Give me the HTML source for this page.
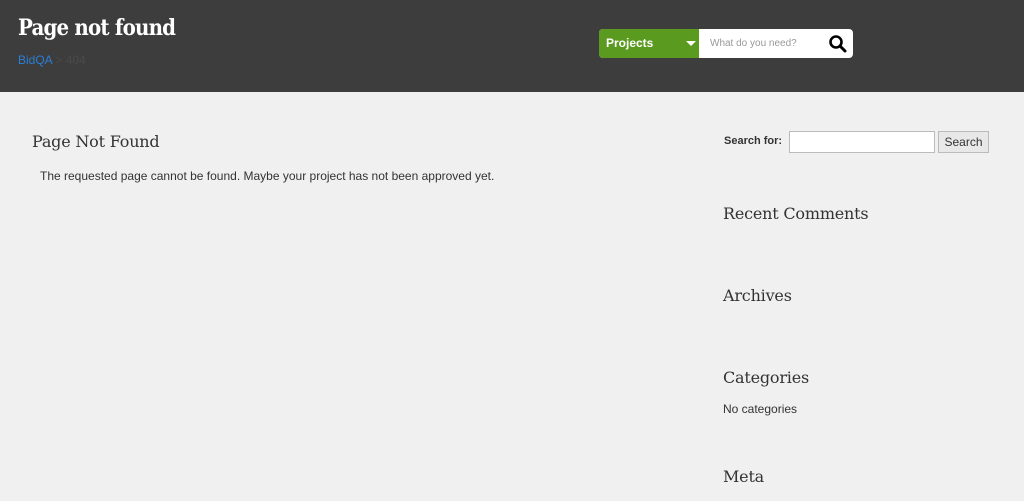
<!DOCTYPE html>
<html><head><style>
body{margin:0;width:1024px;height:501px;background:#f0f0f0;font-family:"Liberation Sans",sans-serif;overflow:hidden;position:relative}
.hd{position:absolute;left:0;top:0;width:1024px;height:92px;background:#3d3d3d}
h1{position:absolute;left:18px;top:15px;margin:0;font:bold 22px "DejaVu Serif",serif;font-stretch:condensed;color:#fff;letter-spacing:-0.8px}
.bc{position:absolute;left:18px;top:53px;font-size:12px;color:#4a4a4a}
.bc a{color:#2a7fd4;text-decoration:none}
.sb{position:absolute;left:599px;top:29px;width:254px;height:29px;border-radius:4px;overflow:hidden;background:#fff}
.pj{position:absolute;left:0;top:0;width:100px;height:29px;background:#5a9a1e;color:#fff;font-weight:bold;font-size:12px;line-height:29px;padding-left:7px;box-sizing:border-box}
.tri{position:absolute;left:87px;top:12px;border-left:5px solid transparent;border-right:5px solid transparent;border-top:5px solid #fff}
.ph{position:absolute;left:111px;top:9px;font-size:10px;color:#999}
.h2{font:16px "DejaVu Serif",serif;color:#333;position:absolute;margin:0;font-weight:normal;letter-spacing:-0.2px}
.t{position:absolute;font-size:12px;color:#333}
</style></head><body>
<div class="hd"></div>
<h1>Page not found</h1>
<div class="bc"><a>BidQA</a> &gt; 404</div>
<div class="sb"><div class="pj">Projects<div class="tri"></div></div><div class="ph">What do you need?</div>
<svg style="position:absolute;left:229px;top:5px" width="20" height="20" viewBox="0 0 20 20"><circle cx="8" cy="8" r="5.5" fill="none" stroke="#000" stroke-width="2.6"/><path d="M12 12l5 5" stroke="#000" stroke-width="3" stroke-linecap="round"/></svg></div>
<div class="h2" style="left:32px;top:132px">Page Not Found</div>
<div class="t" style="left:40px;top:169px">The requested page cannot be found. Maybe your project has not been approved yet.</div>
<div class="t" style="left:724px;top:135px;font-size:11px;font-weight:bold">Search for:</div>
<div style="position:absolute;left:789px;top:131px;width:144px;height:20px;background:#fff;border:1px solid #bbb"></div>
<div style="position:absolute;left:938px;top:131px;width:49px;height:20px;background:#e8e8e8;border:1px solid #bbb;font-size:12px;color:#333;text-align:center;line-height:20px">Search</div>
<div class="h2" style="left:723px;top:204px">Recent Comments</div>
<div class="h2" style="left:723px;top:286px">Archives</div>
<div class="h2" style="left:723px;top:368px">Categories</div>
<div class="t" style="left:723px;top:402px">No categories</div>
<div class="h2" style="left:723px;top:467px">Meta</div>
</body></html>
